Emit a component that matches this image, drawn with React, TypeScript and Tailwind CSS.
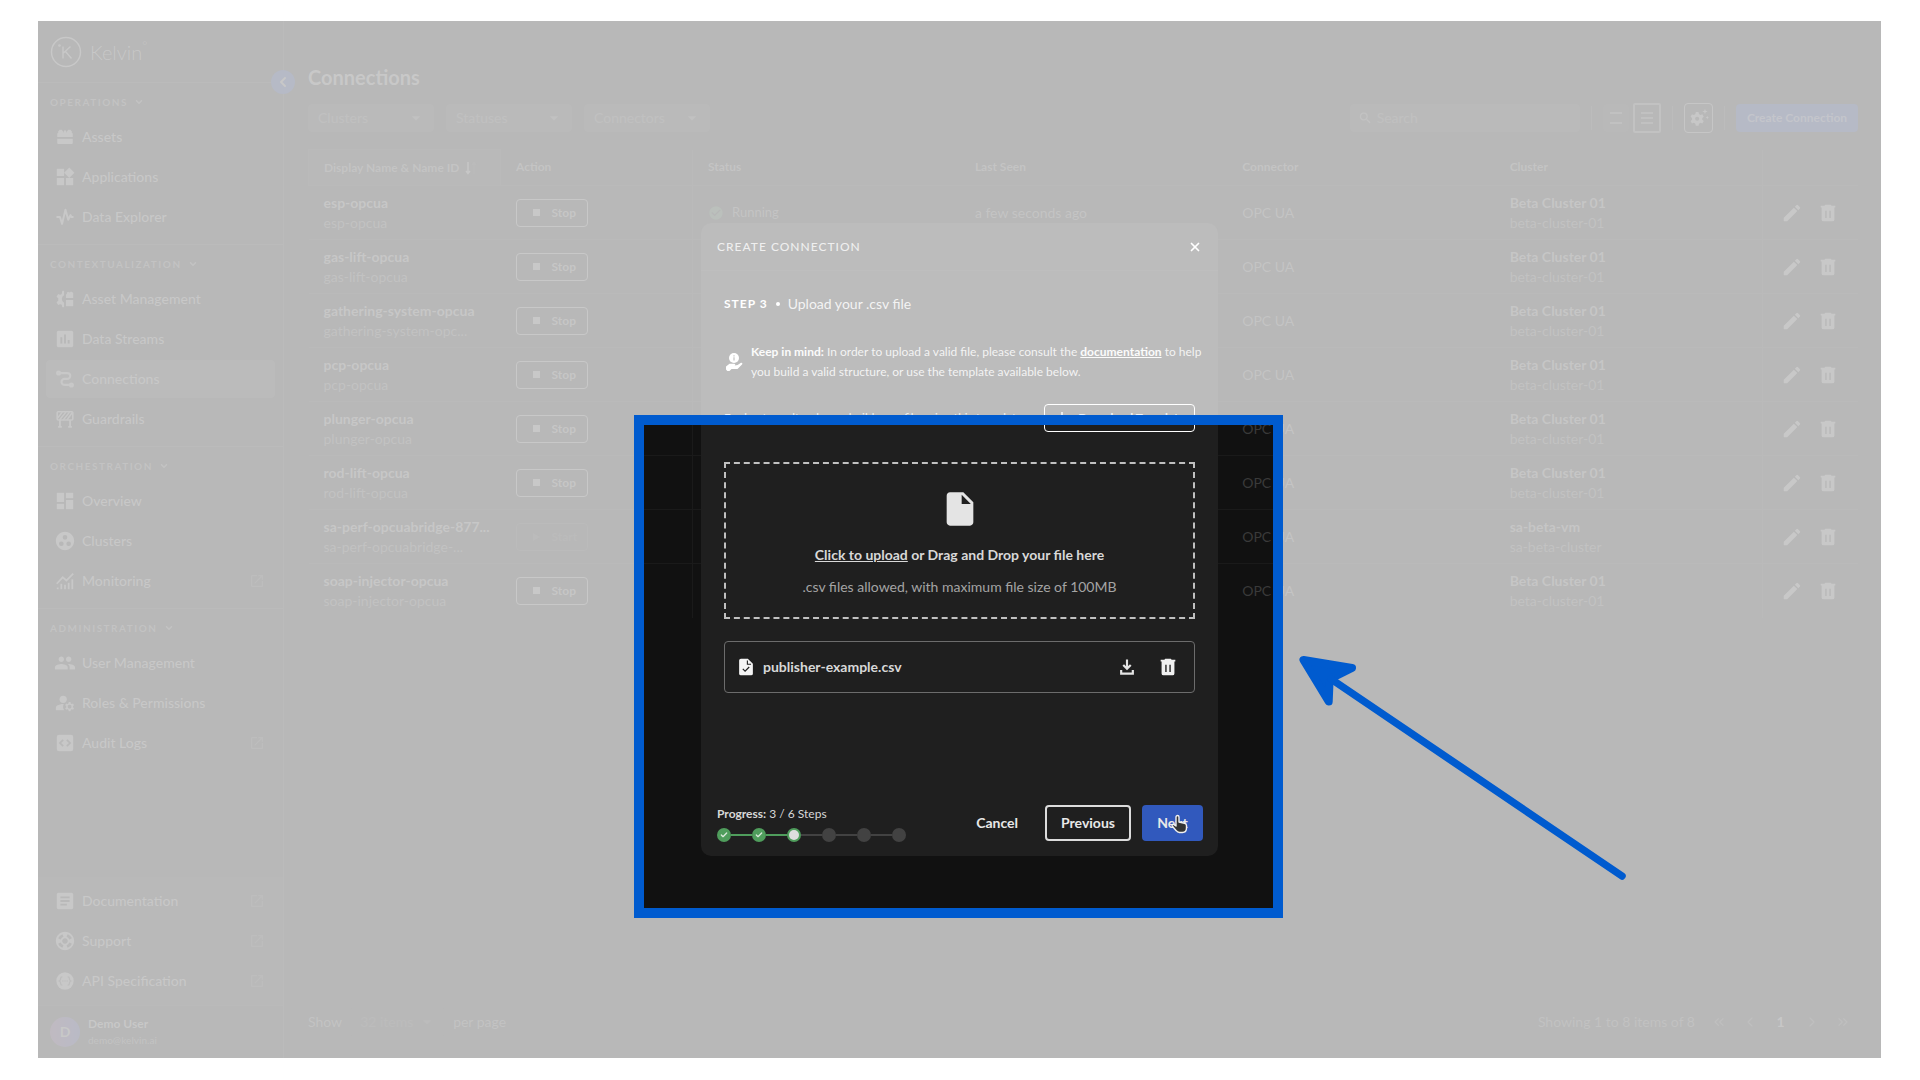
import type { ReactNode } from 'react';
import {
  MdArrowDropDown,
  MdArticle,
  MdAssessment,
  MdCheckCircle,
  MdDashboard,
  MdEdit,
  MdGroup,
  MdGroupWork,
  MdInsertDriveFile,
  MdManageAccounts,
  MdOpenInNew,
  MdSearch,
  MdSupport,
  MdWidgets,
} from 'react-icons/md';
import { Check, ChevronDown, ChevronLeft, ChevronRight, ChevronsLeft, ChevronsRight, X } from 'lucide-react';

type NavItem = {
  label: string;
  icon: ReactNode;
  external?: boolean;
  active?: boolean;
};

type NavSection = {
  title: string;
  items: NavItem[];
};

type Connection = {
  name: string;
  id: string;
  running: boolean;
  cluster: string;
  clusterId: string;
};

const iconClass = 'size-[22px] shrink-0';

const AssetsIcon = () => (
  <svg viewBox="0 0 24 24" fill="currentColor" className={iconClass}>
    <path d="M3.500 12V8.500a1 1 0 0 1 1-1V6L6 4h2.500L10 6v1h.5V6L12 4l1.500 2v1h.5V6l1.500-2H18l1.500 2v1.500a1 1 0 0 1 1 1V12z" />
    <path d="M3.500 14h17v4.500a1 1 0 0 1-1 1h-15a1 1 0 0 1-1-1z" />
  </svg>
);

const PulseIcon = () => (
  <svg viewBox="0 0 24 24" fill="none" stroke="currentColor" strokeWidth="2.200" strokeLinejoin="round" strokeLinecap="round" className={iconClass}>
    <path d="M3.500 12h3l2.300 7.500L12.500 4l3 11 2.500-5 1 2h1.500" />
  </svg>
);

const AssetManagementIcon = () => (
  <svg viewBox="0 0 24 24" fill="currentColor" className={iconClass}>
    <path d="M11 3v5a4.500 4.500 0 0 0 0 8v5H9l-.6-2.600-1.600-.8-2.300.9-1.800-3 1.900-1.700v-2.600L2.700 9.500l1.800-3 2.300.9 1.600-.9L9 3z" />
    <path d="M13 11V7l1-.5V5l1.500-1 1.500 1 1-1h1.500L21 5.500V11zM13 13h8v7h-8z" />
  </svg>
);

const RouteIcon = () => (
  <svg viewBox="0 0 24 24" fill="none" stroke="currentColor" strokeWidth="2.400" className={iconClass}>
    <path d="M5 5.500h9.500a3.200 3.200 0 0 1 0 6.400h-3a3.200 3.200 0 0 0 0 6.600H19" />
    <circle cx="5" cy="5.500" r="1.600" fill="currentColor" />
    <circle cx="19" cy="18.500" r="1.600" fill="currentColor" />
  </svg>
);

const BarrierIcon = () => (
  <svg viewBox="0 0 24 24" fill="none" stroke="currentColor" strokeWidth="1.700" className={iconClass}>
    <rect x="3.500" y="4" width="17" height="9" rx="1" />
    <path d="M4 11l5-6.500M6 13l7-8.500M10 13l7-8.500M14 13l6-8" />
    <path d="M6.500 13v7M17.500 13v7M4.500 20.500h4M15.500 20.500h4" strokeWidth="2" />
  </svg>
);

const MonitoringIcon = () => (
  <svg viewBox="0 0 24 24" fill="none" stroke="currentColor" strokeWidth="2" className={iconClass}>
    <path d="M3 15l6.500-7 4 3.500L21 4" />
    <path d="M4 21v-2M8 21v-6M12 21v-5M16 21v-7M20 21V10" />
  </svg>
);

const CodeSquareIcon = () => (
  <svg viewBox="0 0 24 24" className={iconClass}>
    <rect x="3" y="3" width="18" height="18" rx="2.500" fill="currentColor" />
    <path d="M10 8.500L6.500 12l3.500 3.500M14 8.500l3.500 3.500-3.500 3.500" fill="none" stroke="#141414" strokeWidth="1.800" />
  </svg>
);

const ApiIcon = () => (
  <svg viewBox="0 0 24 24" className={iconClass}>
    <circle cx="12" cy="12" r="9.500" fill="currentColor" />
    <path
      d="M9 7.500c-1.500 0-1.800.6-1.800 1.800 0 1.600-.3 2.300-1.500 2.700 1.200.4 1.500 1.100 1.500 2.700 0 1.200.3 1.800 1.800 1.800M15 7.500c1.500 0 1.800.6 1.800 1.800 0 1.600.3 2.300 1.500 2.700-1.200.4-1.500 1.100-1.500 2.700 0 1.200-.3 1.800-1.800 1.800"
      fill="none"
      stroke="#222"
      strokeWidth="1.300"
    />
    <path d="M9 12h1.200M11.400 12h1.200M13.800 12H15" stroke="#222" strokeWidth="1.200" />
  </svg>
);

const TrashIcon = ({ className }: { className: string }) => (
  <svg viewBox="0 0 24 24" fill="currentColor" fillRule="evenodd" className={className}>
    <path d="M9 3h6l1 1h4v2H4V4h4zM5 6h14v13a2 2 0 0 1-2 2H7a2 2 0 0 1-2-2zm4 3.500v8h1.500v-8zm4.500 0v8H15v-8z" />
  </svg>
);

const DownloadIcon = ({ className }: { className: string }) => (
  <svg viewBox="0 0 24 24" fill="none" stroke="currentColor" strokeWidth="2.600" className={className}>
    <path d="M12 3v11M7.500 9.500L12 14l4.500-4.500" />
    <path d="M5 15.500V20h14v-4.500" />
  </svg>
);

const FileCheckIcon = () => (
  <svg viewBox="0 0 24 24" className="size-[22px] shrink-0">
    <path d="M6.500 3H14l5.500 5.500V19a2 2 0 0 1-2 2h-11a2 2 0 0 1-2-2V5a2 2 0 0 1 2-2z" fill="#f4f4f4" />
    <path d="M13.500 5v4h4" fill="none" stroke="#1f1f1f" strokeWidth="1.200" />
    <path d="M8.500 14l2.500 2.500 4.500-4.500" fill="none" stroke="#1f1f1f" strokeWidth="1.300" />
  </svg>
);

const InfoHandIcon = () => (
  <svg viewBox="0 0 18 20" className="h-5 w-[18px] shrink-0">
    <circle cx="9" cy="6" r="5" fill="#fff" />
    <path d="M9 5.200v3.300M9 3.200v1.200" stroke="#333" strokeWidth="1.200" />
    <path d="M1 14.500l3.500-2.700h4.700c1.200 0 1.500 1.400.4 1.800l3-.5 3-2.200c1.200-.8 2.400.4 1.400 1.500l-4.500 4.500H6.500L4.500 19H2.300L1 17.500z" fill="#fff" />
  </svg>
);

const GearIcon = () => (
  <svg viewBox="0 0 24 24" className="size-[22px]">
    <path
      d="M8.500 5.500h3l.5 2.200 1.600.9 2.100-.7 1.500 2.600-1.600 1.500v1.900l1.600 1.500-1.500 2.600-2.100-.7-1.600.9-.5 2.200h-3L8 18.200l-1.600-.9-2.100.7-1.500-2.600 1.600-1.500V12l-1.600-1.500 1.500-2.600 2.100.7L8 7.700z"
      fill="currentColor"
    />
    <circle cx="10" cy="12.900" r="2.200" fill="#141414" />
    <path d="M18.500 2l.8 2.200 2.200.8-2.200.8-.8 2.200-.8-2.200-2.200-.8 2.200-.8zM21 9.500l.6 1.400 1.400.6-1.400.6-.6 1.400-.6-1.400-1.400-.6 1.400-.6z" fill="currentColor" />
  </svg>
);

const HandCursor = () => (
  <svg viewBox="0 0 18 20" className="pointer-events-none absolute top-[9px] left-7 h-5 w-[18px]">
    <path
      d="M6 12V3a1.500 1.500 0 0 1 3 0v5l5.500 1.200c1.300.3 2 1 2 2.300v2.500c0 2.500-1.500 4.500-4 4.500H9.500c-1.500 0-2.500-.6-3.300-1.800L2.200 12c-.6-1.200.7-2.200 1.800-1.400z"
      fill="#333"
      stroke="#f0f0f0"
      strokeWidth="1.400"
      strokeLinejoin="round"
    />
  </svg>
);

const sections: NavSection[] = [
  {
    title: 'OPERATIONS',
    items: [
      { label: 'Assets', icon: <AssetsIcon /> },
      { label: 'Applications', icon: <MdWidgets className={iconClass} /> },
      { label: 'Data Explorer', icon: <PulseIcon /> },
    ],
  },
  {
    title: 'CONTEXTUALIZATION',
    items: [
      { label: 'Asset Management', icon: <AssetManagementIcon /> },
      { label: 'Data Streams', icon: <MdAssessment className={iconClass} /> },
      { label: 'Connections', icon: <RouteIcon />, active: true },
      { label: 'Guardrails', icon: <BarrierIcon /> },
    ],
  },
  {
    title: 'ORCHESTRATION',
    items: [
      { label: 'Overview', icon: <MdDashboard className={iconClass} /> },
      { label: 'Clusters', icon: <MdGroupWork className={iconClass} /> },
      { label: 'Monitoring', icon: <MonitoringIcon />, external: true },
    ],
  },
  {
    title: 'ADMINISTRATION',
    items: [
      { label: 'User Management', icon: <MdGroup className={iconClass} /> },
      { label: 'Roles & Permissions', icon: <MdManageAccounts className={iconClass} /> },
      { label: 'Audit Logs', icon: <CodeSquareIcon />, external: true },
    ],
  },
];

const helpItems: NavItem[] = [
  { label: 'Documentation', icon: <MdArticle className={iconClass} />, external: true },
  { label: 'Support', icon: <MdSupport className={iconClass} />, external: true },
  { label: 'API Specification', icon: <ApiIcon />, external: true },
];

const beta = { cluster: 'Beta Cluster 01', clusterId: 'beta-cluster-01' };

const connections: Connection[] = [
  { name: 'esp-opcua', id: 'esp-opcua', running: true, ...beta },
  { name: 'gas-lift-opcua', id: 'gas-lift-opcua', running: true, ...beta },
  { name: 'gathering-system-opcua', id: 'gathering-system-opc...', running: true, ...beta },
  { name: 'pcp-opcua', id: 'pcp-opcua', running: true, ...beta },
  { name: 'plunger-opcua', id: 'plunger-opcua', running: true, ...beta },
  { name: 'rod-lift-opcua', id: 'rod-lift-opcua', running: true, ...beta },
  { name: 'sa-perf-opcuabridge-877...', id: 'sa-perf-opcuabridge-...', running: false, cluster: 'sa-beta-vm', clusterId: 'sa-beta-cluster' },
  { name: 'soap-injector-opcua', id: 'soap-injector-opcua', running: true, ...beta },
];

const NavLink = ({ item }: { item: NavItem }) => (
  <li className="h-10 py-px">
    <a
      href="#"
      className={`mx-2 flex h-full items-center gap-1.5 rounded pr-2.5 pl-2 text-sm font-medium ${item.active ? 'bg-[#1c1c1c]' : ''}`}
    >
      {item.icon}
      <span className="flex-1">{item.label}</span>
      {item.external && <MdOpenInNew className="size-4 text-[#242424]" />}
    </a>
  </li>
);

const Sidebar = () => (
  <aside className="flex w-[246px] shrink-0 flex-col border-r border-[#1c1c1c] text-[#464646]">
    <div className="relative flex h-[62px] items-center gap-2 border-b border-[#1c1c1c] pl-3">
      <svg viewBox="0 0 32 32" fill="none" stroke="currentColor" strokeWidth="1.500" className="size-8">
        <circle cx="16" cy="16" r="14.500" />
        <path d="M13 10.500v12M20.500 10.500L13.500 17M15.500 15.500l6 7" />
        <circle cx="9.500" cy="9.500" r=".6" />
      </svg>
      <span className="flex text-xl font-light">
        Kelvin<span className="text-xs">°</span>
      </span>
      <button
        aria-label="Collapse menu"
        className="absolute -right-3 -bottom-3 flex size-6 items-center justify-center rounded-full bg-[#0c1941]"
      >
        <ChevronLeft className="size-4" strokeWidth={3} />
      </button>
    </div>

    <nav className="flex-1">
      {sections.map((section, index) => (
        <section
          key={section.title}
          className={`pt-3 pb-[7px] ${index < sections.length - 1 ? 'border-b border-[#1c1c1c]' : ''}`}
        >
          <h2 className="mb-2 flex h-3.5 items-center gap-1.5 pl-3 text-[10px] font-bold tracking-[1.5px] text-[#363636]">
            {section.title}
            <ChevronDown className="size-2.5" strokeWidth={4} />
          </h2>
          <ul>
            {section.items.map((item) => (
              <NavLink key={item.label} item={item} />
            ))}
          </ul>
        </section>
      ))}
    </nav>

    <ul className="bg-[#141414] py-1">
      {helpItems.map((item) => (
        <NavLink key={item.label} item={item} />
      ))}
    </ul>
    <div className="flex h-[53px] items-center gap-2 border-t border-[#1a1a1a] pl-3">
      <div className="flex size-[30px] items-center justify-center rounded-full bg-linear-to-r from-[#2c1830] to-[#151a40] text-sm font-bold">
        D
      </div>
      <div className="leading-4">
        <p className="text-xs font-bold">Demo User</p>
        <p className="text-[10px] font-medium text-[#363636]">demo@kelvin.ai</p>
      </div>
    </div>
  </aside>
);

const FilterSelect = ({ label }: { label: string }) => (
  <label className="relative block">
    <select
      aria-label={label}
      className="h-7 w-[126px] appearance-none rounded bg-[#1a1a1a] pl-2.5 text-sm text-[#2e2e2e]"
    >
      <option>{label}</option>
    </select>
    <MdArrowDropDown className="pointer-events-none absolute top-1 right-2 size-5 text-[#303030]" />
  </label>
);

const Divider = () => <span className="h-6 w-px bg-[#1f1f1f]" />;

const Toolbar = () => (
  <div className="mt-3 flex items-center gap-3">
    <FilterSelect label="Clusters" />
    <FilterSelect label="Statuses" />
    <FilterSelect label="Connectors" />
    <div className="ml-auto flex items-center gap-[11px]">
      <label className="flex h-7 w-[230px] items-center gap-1 rounded bg-[#1a1a1a] pl-2 text-[#343434]">
        <MdSearch className="size-4" />
        <input
          type="search"
          aria-label="Search"
          placeholder="Search"
          className="w-full bg-transparent text-sm outline-none placeholder:text-[#2e2e2e]"
        />
      </label>
      <Divider />
      <div className="flex items-center gap-1">
        <button aria-label="Compact rows" className="flex h-7 w-[26px] flex-col items-center justify-center gap-2 rounded bg-[#151515]">
          <span className="h-0.5 w-3 bg-[#303030]" />
          <span className="h-0.5 w-3 bg-[#303030]" />
        </button>
        <button
          aria-label="Comfortable rows"
          className="flex h-[30px] w-7 flex-col items-center justify-center gap-[3px] rounded-xs border-2 border-[#343434]"
        >
          <span className="h-0.5 w-3 bg-[#303030]" />
          <span className="h-0.5 w-3 bg-[#303030]" />
          <span className="h-0.5 w-3 bg-[#303030]" />
        </button>
      </div>
      <Divider />
      <button aria-label="Table settings" className="flex h-[30px] w-[29px] items-center justify-center rounded border border-[#424242] text-[#444]">
        <GearIcon />
      </button>
      <Divider />
      <button className="h-7 w-[122px] rounded bg-[#0c1941] text-xs font-bold text-[#3a3f52]">Create Connection</button>
    </div>
  </div>
);

const ConnectionsTable = () => (
  <table className="mt-4 w-full table-fixed text-left text-sm">
    <thead>
      <tr className="h-9 border-b border-[#1a1a1a] text-xs text-[#3a3a3a]">
        <th className="w-48 border border-[#1a1a1a] bg-[#141414] px-[15px] whitespace-nowrap">
          <span className="flex items-center gap-1.5">
            Display Name &amp; Name ID
            <svg viewBox="0 0 12 14" className="h-3.5 w-3" fill="none" strokeWidth="1.500">
              <path d="M3 1v11M1 10l2 2.500L5 10" stroke="#444" />
              <path d="M9 13V2M7 4l2-2.500L11 4" stroke="#1c1c1c" />
            </svg>
          </span>
        </th>
        <th className="w-48 border-r border-[#1a1a1a] px-[15px]">Action</th>
        <th className="px-[15px]">Status</th>
        <th className="px-[15px]">Last Seen</th>
        <th className="px-[15px]">Connector</th>
        <th className="px-[15px]">Cluster</th>
        <th className="w-24 border-l border-[#1a1a1a]" aria-label="Row actions" />
      </tr>
    </thead>
    <tbody>
      {connections.map((connection, index) => (
        <tr key={connection.name} className={`h-[54px] text-[#3a3a3a] ${index < connections.length - 1 ? 'border-b border-[#1a1a1a]' : ''}`}>
          <td className="px-[15px] whitespace-nowrap">
            <p className="font-bold text-[#444]">{connection.name}</p>
            <p className="text-[#343434]">{connection.id}</p>
          </td>
          <td className="border-r border-[#1a1a1a] px-[15px]">
            {connection.running ? (
              <button className="flex h-7 w-[72px] items-center gap-3 rounded border border-[#484848] pl-4 text-xs font-bold text-[#424242]">
                <span className="size-[7px] bg-[#484848]" />
                Stop
              </button>
            ) : (
              <button disabled className="flex h-7 w-[72px] items-center gap-3 rounded border border-[#1b1b1b] pl-4 text-xs font-bold text-[#1d1d1d]">
                <svg viewBox="0 0 7 8" className="h-2 w-[7px]" fill="currentColor">
                  <path d="M0 0l7 4-7 4z" />
                </svg>
                Start
              </button>
            )}
          </td>
          <td className="px-[15px] text-[13px]">
            <span className="flex items-center gap-2">
              <MdCheckCircle className="size-4 text-[#1b2e1f]" />
              Running
            </span>
          </td>
          <td className="px-[15px]">a few seconds ago</td>
          <td className="px-[15px]">OPC UA</td>
          <td className="px-[15px]">
            <p className="font-bold text-[#404040]">{connection.cluster}</p>
            <p className="text-[#343434]">{connection.clusterId}</p>
          </td>
          <td className="border-l border-[#1a1a1a]">
            <div className="flex justify-center gap-3.5 text-[#484848]">
              <button aria-label="Edit">
                <MdEdit className="size-[22px]" />
              </button>
              <button aria-label="Delete">
                <TrashIcon className="size-[22px]" />
              </button>
            </div>
          </td>
        </tr>
      ))}
    </tbody>
  </table>
);

const Pagination = () => (
  <footer className="mt-auto flex items-center justify-between pb-[22px] text-sm text-[#363636]">
    <div className="flex items-center gap-2">
      <label htmlFor="page-size">Show</label>
      <span className="relative">
        <select id="page-size" className="h-7 w-[95px] appearance-none rounded bg-[#131313] pl-2.5 text-[#1f1f1f]">
          <option>32 items</option>
        </select>
        <MdArrowDropDown className="pointer-events-none absolute top-1 right-2 size-5 text-[#1f1f1f]" />
      </span>
      per page
    </div>
    <div className="flex items-center gap-2">
      <span className="text-[#323232]">Showing 1 to 8 items of 8</span>
      <div className="flex items-center text-[#282828]">
        <button aria-label="First page" className="flex w-[31px] justify-center">
          <ChevronsLeft className="size-4" />
        </button>
        <button aria-label="Previous page" className="flex w-[31px] justify-center">
          <ChevronLeft className="size-4" />
        </button>
        <button className="w-[31px] font-bold text-[#444]">1</button>
        <button aria-label="Next page" className="flex w-[31px] justify-center">
          <ChevronRight className="size-4" />
        </button>
        <button aria-label="Last page" className="flex w-[31px] justify-center">
          <ChevronsRight className="size-4" />
        </button>
      </div>
    </div>
  </footer>
);

const steps = ['done', 'done', 'current', 'todo', 'todo', 'todo'];

const Stepper = () => (
  <div className="pt-0.5">
    <p className="text-xs text-[#d8d8d8]">
      <span className="font-bold">Progress:</span> 3 / 6 Steps
    </p>
    <ol className="mt-1.5 flex items-center">
      {steps.map((step, index) => (
        <li key={index} className="flex items-center">
          {index > 0 && <span className={`h-0.5 w-[21px] ${step === 'todo' ? 'bg-[#424242]' : 'bg-[#4f9d5c]'}`} />}
          <span className={`flex size-3.5 items-center justify-center rounded-full ${step === 'todo' ? 'bg-[#424242]' : 'bg-[#4f9d5c]'}`}>
            {step === 'done' && <Check className="size-2 text-[#d8e8da]" strokeWidth={4} />}
            {step === 'current' && <span className="size-2.5 rounded-full bg-[#dedede]" />}
          </span>
        </li>
      ))}
    </ol>
  </div>
);

// Blue frame over the upload area, everything around it is washed out
const Spotlight = () => (
  <>
    <div className="pointer-events-none absolute top-48 -left-[67px] h-[503px] w-[649px] border-[10px] border-[#005bcf] shadow-[0_0_0_9999px_rgba(255,255,255,0.7)]" />
    <svg viewBox="0 0 340 240" className="pointer-events-none absolute top-[430px] left-[592px] h-60 w-[340px]">
      <path
        d="M10.500 7l48.500 8-17 8.500-3 2-2.500 3.500-.8 19.500z"
        fill="#005bcf"
        stroke="#005bcf"
        strokeWidth="8"
        strokeLinejoin="round"
      />
      <path d="M38 26l291 197" stroke="#005bcf" strokeWidth="7.500" strokeLinecap="round" />
    </svg>
  </>
);

const CreateConnectionDialog = () => (
  <div role="dialog" aria-label="Create connection" className="relative flex min-h-[633px] w-[517px] flex-col rounded-[10px] bg-[#1f1f1f] text-[#d8d8d8]">
    <header className="flex h-12 items-center justify-between border-b border-[#262626] px-4">
      <h2 className="text-xs font-medium tracking-[1px] text-[#c8c8c8]">CREATE CONNECTION</h2>
      <button aria-label="Close">
        <X className="size-3.5 text-white" strokeWidth={3} />
      </button>
    </header>

    <div className="flex flex-1 flex-col px-[23px]">
      <p className="mt-[23px] flex items-center gap-2 text-sm">
        <span className="text-xs font-bold tracking-[1px] text-white">STEP 3</span>
        <span className="size-1 rounded-full bg-white" />
        Upload your .csv file
      </p>

      <div className="mt-7 flex items-center gap-2 pl-px text-xs leading-5">
        <InfoHandIcon />
        <p className="whitespace-nowrap">
          <strong className="text-[#f0f0f0]">Keep in mind:</strong> In order to upload a valid file, please consult the{' '}
          <a href="#" className="font-bold text-[#f0f0f0] underline">
            documentation
          </a>{' '}
          to help
          <br />
          you build a valid structure, or use the template available below.
        </p>
      </div>

      <div className="mt-[22px] flex items-center justify-between text-xs">
        <p className="whitespace-nowrap">For best results, always build your file using this template</p>
        <button className="flex h-7 w-[151px] items-center justify-center gap-2 rounded border border-white font-bold">
          <DownloadIcon className="size-4" />
          Download Template
        </button>
      </div>

      <label className="relative mt-[30px] flex h-[157px] flex-col items-center border-2 border-dashed border-[#c0c0c0] pt-[25px] text-sm">
        <input type="file" accept=".csv" className="sr-only" />
        <MdInsertDriveFile className="size-10 text-[#e4e4e4]" />
        <span className="mt-4 font-bold">
          <span className="underline">Click to upload</span> or Drag and Drop your file here
        </span>
        <span className="mt-3 text-[#a4a4a4]">.csv files allowed, with maximum file size of 100MB</span>
      </label>

      <div className="mt-[22px] flex h-[52px] items-center rounded border border-[#6c6c6c] pr-[15px] pl-2.5 text-sm">
        <FileCheckIcon />
        <span className="ml-1.5 flex-1 font-bold">publisher-example.csv</span>
        <button aria-label="Download" className="text-[#e4e4e4]">
          <DownloadIcon className="size-5" />
        </button>
        <button aria-label="Remove file" className="ml-5 text-[#f0f0f0]">
          <TrashIcon className="size-[22px]" />
        </button>
      </div>
    </div>

    <footer className="flex items-center justify-between pr-[15px] pb-3.5 pl-4">
      <Stepper />
      <div className="flex items-center text-sm font-bold text-[#e8e8e8]">
        <button className="mr-[27px]">Cancel</button>
        <button className="mr-[11px] h-9 w-[86px] rounded border-2 border-[#dcdcdc]">Previous</button>
        <div className="relative">
          <button className="h-9 w-[61px] rounded bg-[#3159bd]">Next</button>
          <HandCursor />
        </div>
      </div>
    </footer>

    <Spotlight />
  </div>
);

export default function App() {
  return (
    <div className="flex min-h-screen bg-white pt-[21px] pr-[39px] pb-[22px] pl-[38px] font-[Lato,'Liberation_Sans',sans-serif]">
      <div className="relative flex w-full overflow-hidden bg-[#111]">
        <Sidebar />
        <main className="flex min-w-0 flex-1 flex-col pt-[42px] pr-[23px] pl-6 text-[#484848]">
          <h1 className="text-xl leading-7 font-bold">Connections</h1>
          <Toolbar />
          <ConnectionsTable />
          <Pagination />
        </main>
        <div className="absolute inset-0 flex items-center justify-center">
          <CreateConnectionDialog />
        </div>
      </div>
    </div>
  );
}
